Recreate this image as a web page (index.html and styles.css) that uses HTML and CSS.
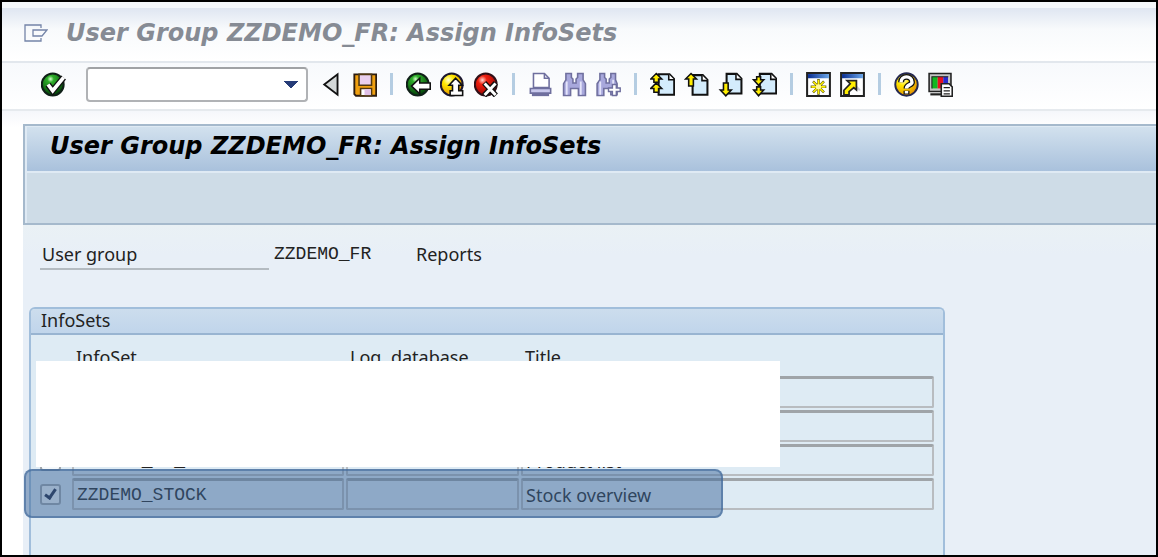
FILE: index.html
```html
<!DOCTYPE html>
<html lang="en">
<head>
    <meta charset="UTF-8">
    <title>User Group ZZDEMO_FR: Assign InfoSets</title>
    <link rel="stylesheet" href="styles.css">
</head>
<body>
<svg class="defs" aria-hidden="true">
    <defs>
        <radialGradient id="green" cx=".4" cy=".25" r=".75">
            <stop offset="0" stop-color="#d8ffd0"/><stop offset=".2" stop-color="#2fae2a"/><stop offset="1" stop-color="#024008"/>
        </radialGradient>
        <radialGradient id="yellow" cx=".35" cy=".3" r=".8">
            <stop offset="0" stop-color="#ffffd0"/><stop offset=".3" stop-color="#ffe800"/><stop offset="1" stop-color="#e08400"/>
        </radialGradient>
        <radialGradient id="red" cx=".35" cy=".3" r=".8">
            <stop offset="0" stop-color="#ffd8d0"/><stop offset=".25" stop-color="#f02010"/><stop offset="1" stop-color="#8c0000"/>
        </radialGradient>
        <linearGradient id="navy">
            <stop offset="0" stop-color="#082c90"/><stop offset="1" stop-color="#6ba6e8"/>
        </linearGradient>
    </defs>
</svg>
<div class="window">
    <header class="titlebar">
        <svg class="menu-icon" viewBox="0 0 24 18" fill="none" stroke="#7484a8" stroke-width="1.3"><path d="M17 4V1H1v16h16v-3"/><path d="M9 6h14l-5 6H9z"/></svg>
        <h1>User Group ZZDEMO_FR: Assign InfoSets</h1>
    </header>

    <nav class="toolbar">
        <button aria-label="Enter"><svg viewBox="0 0 16 16"><circle cx="7.5" cy="8" r="7" fill="url(#green)" stroke="#102018" stroke-width="1.3"/><path d="M4.500 8l3 4 7-8.500" fill="none" stroke="#111" stroke-width="4"/><path d="M4.500 8l3 4 7-8.500" fill="none" stroke="#fff" stroke-width="2.3"/></svg></button>
        <select class="command" aria-label="Command"><option></option></select>
        <button aria-label="Previous"><svg viewBox="0 0 16 16"><path d="M12.500 1.500v13L4 8z" fill="#d4d8d8" stroke="#111" stroke-width="1.2"/></svg></button>
        <button aria-label="Save"><svg viewBox="0 0 16 16"><path d="M1.500 1.500h14v13.700H2.500l-1-1z" fill="#f0a010" stroke="#2c1c10" stroke-width="1.2"/><path d="M4.500 1.500h8v7h-8z" fill="#ead0ee" stroke="#503810"/><path d="M5.500 10.500h7v4.700h-7z" fill="#fff" stroke="#503810"/><path d="M8 11h4v3.800H8z" fill="#e0c0e6"/></svg></button>
        <span class="sep"></span>
        <button aria-label="Back"><svg viewBox="0 0 16 16"><circle cx="7.5" cy="8" r="7" fill="url(#green)" stroke="#102018" stroke-width="1.3"/><path d="M3.500 9l5.300-5v3h6.700v4H8.800v3z" fill="#fff" stroke="#111"/></svg></button>
        <button aria-label="Exit"><svg viewBox="0 0 16 16"><circle cx="7.5" cy="8" r="7" fill="url(#yellow)" stroke="#1c1830" stroke-width="1.3"/><path d="M10 4l4.200 4.500H12v3.500h2.500v3h-8v-3H8V8.500H5.800z" fill="#fff" stroke="#111"/></svg></button>
        <button aria-label="Cancel"><svg viewBox="0 0 16 16"><circle cx="7.5" cy="8" r="7" fill="url(#red)" stroke="#301018" stroke-width="1.3"/><path d="M6.500 7l7.500 8M14 7l-7.500 8" stroke="#111" stroke-width="3.600"/><path d="M6.800 7.300l7 7.400M13.800 7.300l-7 7.400" stroke="#fff" stroke-width="1.900"/></svg></button>
        <span class="sep"></span>
        <button aria-label="Print"><svg viewBox="0 0 16 16" stroke="#6f6f9e" fill="#fff"><path d="M3.500 10V1h7l3 3v6z"/><path d="M10.500 1v3h3" fill="none"/><path d="M1.500 10.500h13v3h-13z" fill="#c8c8ec"/><path d="M2.500 14.700h11" stroke-width="1.500"/></svg></button>
        <button aria-label="Find"><svg viewBox="0 0 16 16" stroke="#6f6f9e" fill="#a8a8dc"><path d="M2.500 1h3.500v2.500l1 1v2.500h2V4.500l1-1V1h3.500v4l1.500 2.500v7.500h-4.500v-4.500H5.500v4.500H1V7.500L2.500 5z"/><path d="M3 6v8.500M12 6v8.500" stroke="#e4e4fa" stroke-width="1.200"/></svg></button>
        <button aria-label="Find next"><svg viewBox="0 0 16 16" stroke="#6f6f9e" fill="#a8a8dc"><path d="M2.500 1h3v2.500l1 1v2.500h2V4.500l1-1V1h3v4l1 2.500v7h-4v-4H5v4.500H.7V7.500l1.800-2.500z"/><path d="M2.700 6v8.500M11 5v4" stroke="#e4e4fa" stroke-width="1.200"/><path d="M10.500 8h2.500v2.200h2.500v2.300H13V15h-2.500v-2.500H8v-2.300h2.500z" fill="#fff" stroke-width=".9"/></svg></button>
        <span class="sep"></span>
        <button aria-label="First page"><svg viewBox="0 0 16 16" stroke="#111"><path d="M5.500 1.500h7l3 3v10h-10z" fill="#d4ecfc" stroke-width="1.300"/><path d="M12 1.500v3.500h3.500" fill="#fff"/><path d="M4 1l3.500 3.500h-2v2h-3v-2h-2z" fill="#ffee00"/><path d="M4 7l3.500 3.500h-2V13h-3v-2.500h-2z" fill="#ffee00"/></svg></button>
        <button aria-label="Previous page"><svg viewBox="0 0 16 16" stroke="#111"><path d="M5.500 2h6.500l3 3v9.500H5.500z" fill="#d4ecfc" stroke-width="1.300"/><path d="M11.500 2v3.500H15" fill="#fff"/><path d="M4.500 1L8 4.500H6V9H3V4.500H1z" fill="#ffee00"/></svg></button>
        <button aria-label="Next page"><svg viewBox="0 0 16 16" stroke="#111"><path d="M5.500 1.200h6.500l3 3v9.500H5.500z" fill="#d4ecfc" stroke-width="1.300"/><path d="M11.500 1.200v3.500H15" fill="#fff"/><path d="M3.500 7h3v4.500h2L5 15.200l-3.500-3.700h2z" fill="#ffee00"/></svg></button>
        <button aria-label="Last page"><svg viewBox="0 0 16 16" stroke="#111"><path d="M5 1.200h7.500l3 3v9.500H5z" fill="#d4ecfc" stroke-width="1.300"/><path d="M12 1.200v3.500h3.500" fill="#fff"/><path d="M3 3h2.500v2h2L4.200 8.500 1 5h2z" fill="#ffee00"/><path d="M3 9.500h2.500v2h2l-3.300 3.700L1 11.500h2z" fill="#ffee00"/></svg></button>
        <span class="sep"></span>
        <button aria-label="New session"><svg viewBox="0 0 16 16"><path d="M.7.7h14.600v14.600H.7z" fill="#fff" stroke="#222" stroke-width="1.300"/><path d="M1.300 1.300h13.400v2.700H1.300z" fill="url(#navy)"/><path d="M8 4.500v10M3 9.500h10M4.500 6l7 7M11.500 6l-7 7" stroke="#5c5810" stroke-width="1.600"/><path d="M8 5v9M3.500 9.500h9M4.700 6.200l6.600 6.600M11.300 6.200l-6.600 6.600" stroke="#fff000"/><circle cx="8" cy="9.500" r="1.700" fill="#fff8a0"/></svg></button>
        <button aria-label="Create shortcut"><svg viewBox="0 0 16 16"><path d="M.7.7h14.600v14.600H.7z" fill="#fff" stroke="#222" stroke-width="1.300"/><path d="M1.300 1.300h13.400v2.700H1.300z" fill="url(#navy)"/><path d="M10 8l3 3v1l-5-1z" fill="#ccd0d8"/><path d="M4.500 5.500h6v6L8.800 10l-3 2.500v2.200H2.500v-3L6.500 7.500z" fill="#ffee00" stroke="#222" stroke-width="1.100"/></svg></button>
        <span class="sep"></span>
        <button aria-label="Help"><svg viewBox="0 0 16 16"><circle cx="8" cy="8" r="7.200" fill="url(#yellow)" stroke="#252850" stroke-width="1.200"/><path d="M4.500 6.500c0-4.500 7-4.500 7 0C11.500 8.500 8 8 8 10.500M8 12v2.300" fill="none" stroke="#111" stroke-width="3.800"/><path d="M4.500 6.500c0-4.500 7-4.500 7 0C11.500 8.500 8 8 8 10.500M8 12.200v1.600" fill="none" stroke="#fff" stroke-width="2.200"/></svg></button>
        <button aria-label="Customize layout"><svg viewBox="0 0 16 16"><path d="M.7 1h14v11.500H.7z" fill="#c4c4c4" stroke="#222"/><path d="M2.500 3h3.700v7.500H2.500z" fill="#10b820"/><path d="M6.200 3h3.600v7.500H6.200z" fill="#e81020"/><path d="M9.800 3h3v7.500h-3z" fill="#2828d0"/><path d="M2.500 10.500V3h10.500" fill="none" stroke="#222" stroke-width=".7"/><path d="M1.500 14.300h7" stroke="#222" stroke-width="1.400"/><path d="M8.500 7.500h5l2 2v6h-7z" fill="#fff" stroke="#222"/><path d="M10 10h4M10 12h4M10 14h4" stroke="#222" stroke-width=".8"/></svg></button>
    </nav>

    <main>
        <div class="screen-head">
            <h2>User Group ZZDEMO_FR: Assign InfoSets</h2>
            <div class="app-toolbar"></div>
        </div>

        <div class="screen">
            <div class="user-group">
                <span class="label">User group</span>
                <span class="mono">ZZDEMO_FR</span>
                <span class="desc">Reports</span>
            </div>

            <section class="panel">
                <h3>InfoSets</h3>
                <table>
                    <colgroup><col class="c-check"><col class="c-name"><col class="c-db"><col></colgroup>
                    <thead>
                        <tr><th></th><th>InfoSet</th><th>Log. database</th><th>Title</th></tr>
                    </thead>
                    <tbody>
                        <tr>
                            <td><input type="checkbox" aria-label="Assign row 1"></td>
                            <td><input class="field mono" aria-label="InfoSet 1" readonly></td>
                            <td><input class="field mono" aria-label="Log. database 1" readonly></td>
                            <td><input class="field" aria-label="Title 1" readonly></td>
                        </tr>
                        <tr>
                            <td><input type="checkbox" aria-label="Assign row 2"></td>
                            <td><input class="field mono" aria-label="InfoSet 2" readonly></td>
                            <td><input class="field mono" aria-label="Log. database 2" readonly></td>
                            <td><input class="field" aria-label="Title 2" readonly></td>
                        </tr>
                        <tr>
                            <td><input type="checkbox" aria-label="Assign row 3"></td>
                            <td><input class="field mono" aria-label="InfoSet 3" value="ZZDEMO_PR_SOC" readonly></td>
                            <td><input class="field mono" aria-label="Log. database 3" readonly></td>
                            <td><input class="field" aria-label="Title 3" value="Product list" readonly></td>
                        </tr>
                        <tr>
                            <td><input type="checkbox" aria-label="Assign ZZDEMO_STOCK" checked></td>
                            <td><input class="field mono" aria-label="InfoSet 4" value="ZZDEMO_STOCK" readonly></td>
                            <td><input class="field mono" aria-label="Log. database 4" readonly></td>
                            <td><input class="field" aria-label="Title 4" value="Stock overview" readonly></td>
                        </tr>
                    </tbody>
                </table>
                <div class="cover"></div>
                <div class="highlight"></div>
            </section>
        </div>
    </main>
</div>
</body>
</html>
```
FILE: styles.css
```css
* {
    box-sizing: border-box;
}
body {
    margin: 0;
    font-family: "Noto Sans", Tahoma, sans-serif;
    font-size: 18px;
    line-height: 24px;
    color: #222;
}
h1, h2, h3 {
    margin: 0;
}
.defs {
    position: absolute;
    width: 0;
    height: 0;
}
.window {
    display: flex;
    flex-direction: column;
    min-height: 100vh;
    border: 2px solid #000;
    background: #fff;
}

/* title bar */
.titlebar {
    display: flex;
    align-items: center;
    gap: 18px;
    height: 61px;
    padding: 0 22px 4px;
    border-top: 6px solid #f5f8fb;
    border-bottom: 2px solid #e2e7ed;
    background: linear-gradient(#dfe6f1, #f8fafc 40%, #fff);
}
.menu-icon {
    width: 24px;
    height: 18px;
}
h1, h2 {
    font-family: "DejaVu Sans", Verdana, sans-serif;
    font-size: 24px;
    line-height: 32px;
    font-weight: bold;
    font-style: italic;
}
h1 {
    color: #868b94;
}

/* standard toolbar */
.toolbar {
    display: flex;
    align-items: center;
    gap: 9px;
    height: 48px;
    padding: 0 39px 4px;
    border-bottom: 2px solid #e6eaee;
    background: linear-gradient(#f7f9fc, #fff);
}
.toolbar button {
    width: 25px;
    height: 25px;
    padding: 0;
    border: 0;
    background: none;
}
.toolbar svg {
    display: block;
    width: 25px;
    height: 25px;
}
.command {
    width: 222px;
    height: 35px;
    margin: 0 1px 0 11px;
    border: 2px solid #b0b2b5;
    border-top-color: #a0a2a5;
    border-radius: 4px;
    appearance: none;
    background: conic-gradient(from -45deg at 50% 100%, #263c78 90deg, transparent 0) 196px 12px / 14px 7px no-repeat, #fff;
}
.sep {
    width: 3px;
    height: 22px;
    margin: 0 4px;
    background: #b5cde2;
}

/* dynpro area */
main {
    flex: 1;
    display: flex;
    flex-direction: column;
    padding: 13px 0 0 21px;
    background: linear-gradient(#f5f7fb, #fff 16px);
}
.screen-head {
    border: 2px solid #a5b9cc;
    border-right: 0;
    background: #cedce7;
}
h2 {
    height: 47px;
    padding: 3px 23px;
    border: solid #dfeaf4;
    border-width: 1px 0 2px 2px;
    color: #000;
    background: linear-gradient(#d2e1ee, #a9c1dc);
}
.app-toolbar {
    height: 50px;
    border-left: 2px solid #dfeaf4;
}
.screen {
    flex: 1;
    display: flex;
    flex-direction: column;
    gap: 37px;
    padding: 17px 6px 0;
    background: linear-gradient(#eaf1f5, #e8eff7 30px);
}
.user-group {
    display: flex;
    padding-left: 11px;
}
.user-group .label {
    width: 229px;
    height: 28px;
    padding-left: 2px;
    border-bottom: 2px solid #b4bbc1;
}
.mono {
    font-family: "Liberation Mono", monospace;
}
.user-group .mono {
    width: 142px;
    padding-left: 5px;
}
.user-group .desc {
    padding-left: 5px;
}

/* InfoSets box */
.panel {
    position: relative;
    flex: 1;
    width: 100%;
    max-width: 916px;
    border: 2px solid #a1bedb;
    border-bottom: 0;
    border-radius: 6px 6px 0 0;
    background: #deebf4;
}
h3 {
    height: 26px;
    padding-left: 10px;
    border-bottom: 2px solid #98b4d1;
    border-radius: 4px 4px 0 0;
    font-size: 18px;
    line-height: 23px;
    font-weight: normal;
    background: linear-gradient(#ccdded, #c0d5eb);
}
table {
    width: 100%;
    padding: 9px 7px 0 9px;
    border-spacing: 0;
    table-layout: fixed;
}
th {
    height: 32px;
    padding: 0 0 0 4px;
    font-weight: normal;
    line-height: 26px;
    text-align: left;
    vertical-align: top;
}
td {
    height: 34px;
    padding: 0 2px 0 0;
    vertical-align: top;
}
.c-check {
    width: 32px;
}
.c-name {
    width: 274px;
}
.c-db {
    width: 175px;
}
.field {
    display: block;
    width: 100%;
    height: 32px;
    padding: 1px 3px 0;
    border: 2px solid #b8bcc0;
    border-top: 3px solid #9fa4a8;
    border-radius: 2px;
    background: #deebf4;
    color: #222;
    font-size: 18px;
}
.field:not(.mono) {
    font-family: inherit;
}
input[type="checkbox"] {
    display: block;
    appearance: none;
    width: 21px;
    height: 21px;
    margin: 6px 0 0;
    border: 2px solid #a0a6ac;
    border-radius: 3px;
    background: #f4f8fb;
}
input[type="checkbox"]:checked::after {
    content: "";
    display: block;
    width: 7px;
    height: 12px;
    margin: 1px 0 0 5px;
    border: solid #1c2440;
    border-width: 0 3px 3px 0;
    transform: rotate(35deg);
}
td:first-child {
    line-height: 0;
}
input[type="checkbox"]::after {
    box-sizing: border-box;
}
.cover {
    position: absolute;
    top: 52px;
    left: 5px;
    width: 744px;
    height: 106px;
    background: #fff;
}
.highlight {
    position: absolute;
    top: 160px;
    left: -7px;
    width: 699px;
    height: 49px;
    border: 2px solid rgba(61, 103, 154, .6);
    border-radius: 8px;
    background: rgba(61, 103, 154, .5);
    pointer-events: none;
}
```
